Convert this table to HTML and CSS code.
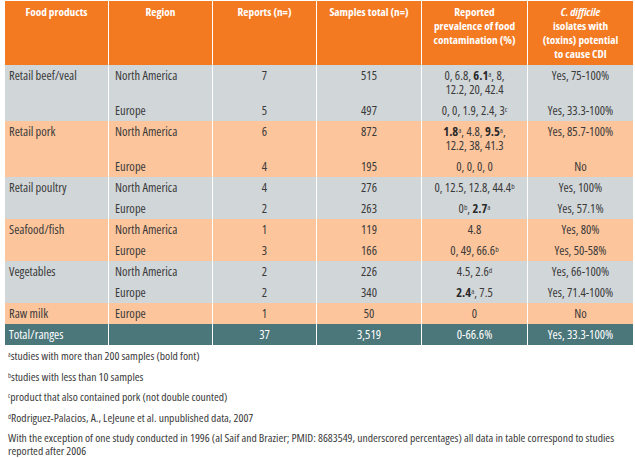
FILE: index.html
```html
<!DOCTYPE html>
<html lang="en">
<head>
<meta charset="utf-8">
<title>C. difficile in food products</title>
<link rel="stylesheet" href="styles.css">
</head>
<body>
<table class="data">
  <colgroup>
    <col class="c1"><col class="c2"><col class="c3"><col class="c4"><col class="c5"><col class="c6">
  </colgroup>
  <thead>
    <tr>
      <th>Food products</th>
      <th>Region</th>
      <th>Reports (n=)</th>
      <th>Samples total (n=)</th>
      <th>Reported<br>prevalence of food<br>contamination (%)</th>
      <th><em>C. difficile</em><br>isolates with<br>(toxins) potential<br>to cause CDI</th>
    </tr>
  </thead>
  <tbody>
    <tr class="gray">
      <td class="food" rowspan="2">Retail beef/veal</td>
      <td class="region">North America</td>
      <td>7</td><td>515</td>
      <td>0, 6.8, <b>6.1</b><span class="sup">a</span>, 8,<br>12.2, 20, 42.4</td>
      <td>Yes, 75-100%</td>
    </tr>
    <tr class="gray">
      <td class="region">Europe</td>
      <td>5</td><td>497</td>
      <td>0, 0, 1.9, 2.4, 3<span class="sup">c</span></td>
      <td>Yes, 33.3-100%</td>
    </tr>
    <tr class="peach">
      <td class="food" rowspan="2">Retail pork</td>
      <td class="region">North America</td>
      <td>6</td><td>872</td>
      <td><b>1.8</b><span class="sup">a</span>, 4.8, <b>9.5</b><span class="sup">a</span>,<br>12.2, 38, 41.3</td>
      <td>Yes, 85.7-100%</td>
    </tr>
    <tr class="peach">
      <td class="region">Europe</td>
      <td>4</td><td>195</td>
      <td>0, 0, 0, 0</td>
      <td>No</td>
    </tr>
    <tr class="gray">
      <td class="food" rowspan="2">Retail poultry</td>
      <td class="region">North America</td>
      <td>4</td><td>276</td>
      <td>0, 12.5, 12.8, 44.4<span class="sup">b</span></td>
      <td>Yes, 100%</td>
    </tr>
    <tr class="gray">
      <td class="region">Europe</td>
      <td>2</td><td>263</td>
      <td>0<span class="sup">b</span>, <b>2.7</b><span class="sup">a</span></td>
      <td>Yes, 57.1%</td>
    </tr>
    <tr class="peach">
      <td class="food" rowspan="2">Seafood/fish</td>
      <td class="region">North America</td>
      <td>1</td><td>119</td>
      <td>4.8</td>
      <td>Yes, 80%</td>
    </tr>
    <tr class="peach">
      <td class="region">Europe</td>
      <td>3</td><td>166</td>
      <td>0, 49, 66.6<span class="sup">b</span></td>
      <td>Yes, 50-58%</td>
    </tr>
    <tr class="gray">
      <td class="food" rowspan="2">Vegetables</td>
      <td class="region">North America</td>
      <td>2</td><td>226</td>
      <td>4.5, 2.6<span class="sup">d</span></td>
      <td>Yes, 66-100%</td>
    </tr>
    <tr class="gray">
      <td class="region">Europe</td>
      <td>2</td><td>340</td>
      <td><b>2.4</b><span class="sup">a</span>, 7.5</td>
      <td>Yes, 71.4-100%</td>
    </tr>
    <tr class="peach">
      <td class="food">Raw milk</td>
      <td class="region">Europe</td>
      <td>1</td><td>50</td>
      <td>0</td>
      <td>No</td>
    </tr>
  </tbody>
  <tfoot>
    <tr class="total">
      <td class="food">Total/ranges</td>
      <td class="region"></td>
      <td>37</td><td>3,519</td>
      <td>0-66.6%</td>
      <td>Yes, 33.3-100%</td>
    </tr>
  </tfoot>
</table>
<div class="notes">
  <p><span class="nsup">a</span>studies with more than 200 samples (bold font)</p>
  <p><span class="nsup">b</span>studies with less than 10 samples</p>
  <p><span class="nsup">c</span>product that also contained pork (not double counted)</p>
  <p><span class="nsup">d</span>Rodriguez-Palacios, A., LeJeune et al. unpublished data, 2007</p>
  <p>With the exception of one study conducted in 1996 (al Saif and Brazier; PMID: 8683549, underscored percentages) all data in table correspond to studies reported after 2006</p>
</div>
</body>
</html>
```
FILE: styles.css
```css
html, body {
  margin: 0;
  padding: 0;
  background: #ffffff;
}
body {
  font-family: "Open Sans", "DejaVu Sans", sans-serif;
  font-stretch: condensed;
  font-size: 11px;
  color: #3a3a3a;
}
.data {
  margin: 1px 0 0 4px;
  width: 629px;
  table-layout: fixed;
  border-collapse: collapse;
}
.c1 { width: 104px; }
.c2 { width: 104px; }
.c3 { width: 104px; }
.c4 { width: 105px; }
.c5 { width: 106px; }
.c6 { width: 106px; }
.data th,
.data td {
  border-left: 1px solid #ffffff;
  border-right: 1px solid #ffffff;
  line-height: 14px;
  vertical-align: top;
  text-align: center;
}
.data th {
  background: #f47a22;
  color: #ffffff;
  font-size: 11.3px;
  font-weight: 700;
  height: 56px;
  padding: 4px 4px 4px;
  white-space: nowrap;
}
.data th em {
  font-style: italic;
}
.data td {
  font-size: 12.5px;
  padding: 3.5px 6px 3.5px;
  white-space: nowrap;
}
.data td.food {
  text-align: left;
  padding-left: 4px;
}
.data td.region {
  text-align: left;
  padding-left: 6px;
}
.gray td { background: #d1d6d9; }
.peach td { background: #fdc59c; }
.total td {
  background: #4b767a;
  color: #ffffff;
}
.data b {
  font-weight: 700;
  color: #2a2a2a;
}
.sup {
  font-size: 7.5px;
  line-height: 0;
  vertical-align: 3px;
}
.notes {
  margin: 4px 0 0 8px;
  font-size: 11.6px;
  color: #3a3a3a;
}
.notes p {
  margin: 0 0 6.5px;
  line-height: 14px;
}
.notes p:last-child {
  line-height: 13px;
  margin-bottom: 0;
}
.nsup {
  font-size: 6.5px;
  line-height: 0;
  vertical-align: 3px;
}
```
